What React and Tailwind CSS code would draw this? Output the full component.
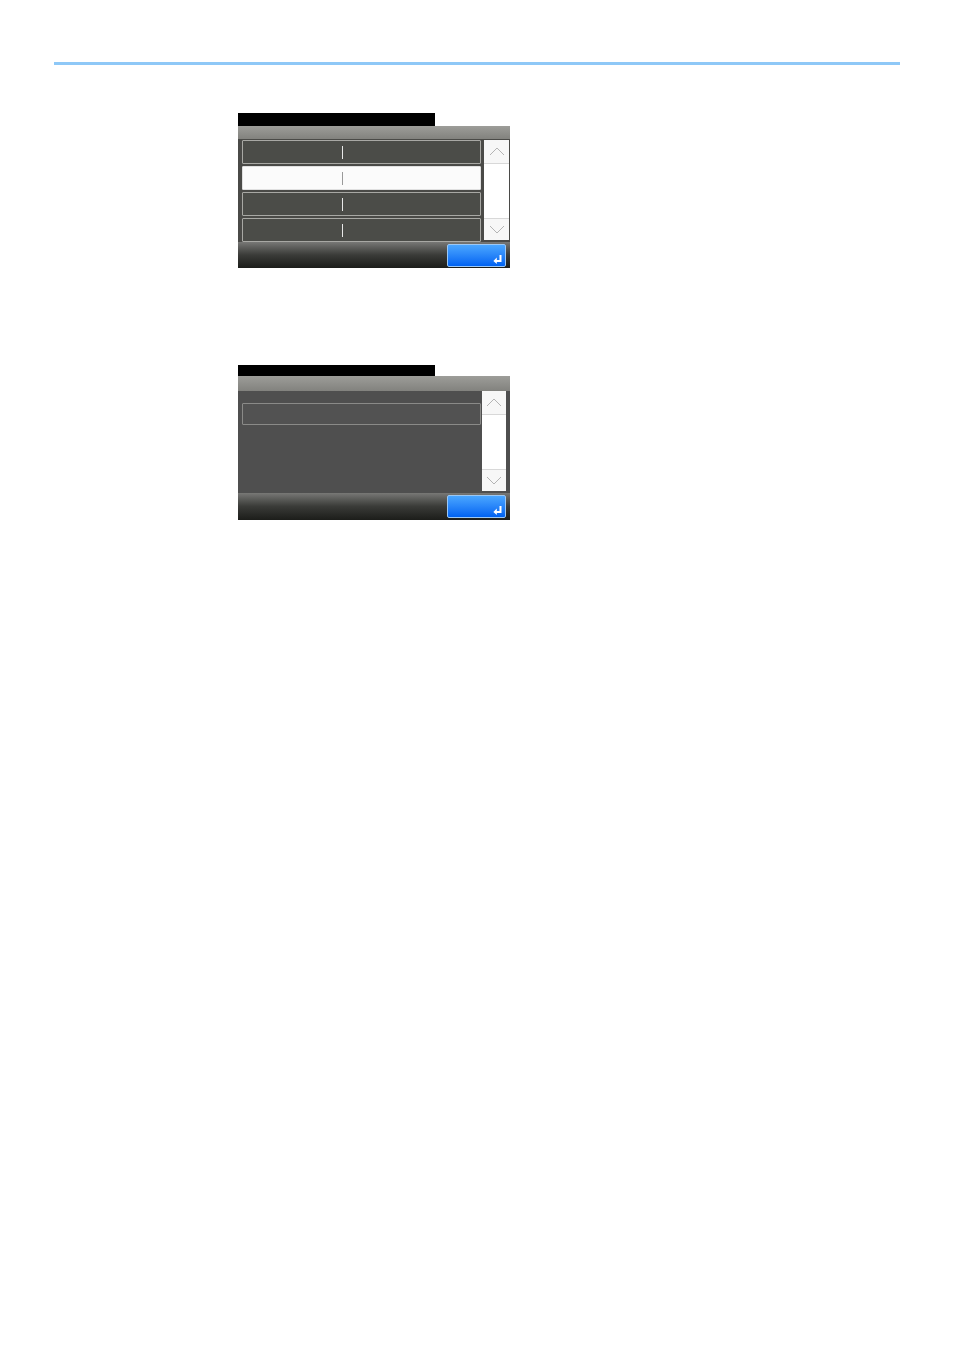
import React from 'react';

const rows = [
  { selected: false },
  { selected: true },
  { selected: false },
  { selected: false },
];

const Chevron = ({ down }) => (
  <svg width="16" height="9" viewBox="0 0 16 9" fill="none">
    <polyline
      points={down ? '1,1 8,8 15,1' : '1,8 8,1 15,8'}
      stroke="#b4b4b4"
      strokeWidth="1"
    />
  </svg>
);

const EnterIcon = () => (
  <svg width="9" height="9" viewBox="0 0 9 9" fill="none">
    <path d="M7.5 0 V6 H3" stroke="white" strokeWidth="2" />
    <path d="M3.8 2.6 L0.4 6 L3.8 9 Z" fill="white" />
  </svg>
);

const ScrollBar = ({ className }) => (
  <div className={`flex flex-col justify-between bg-white ${className}`}>
    <div className="h-[24px] flex items-center justify-center border-b border-[#d8d8d8] bg-[#f7f7f7]">
      <Chevron />
    </div>
    <div className="h-[22px] flex items-center justify-center border-t border-[#d8d8d8] bg-[#f7f7f7]">
      <Chevron down />
    </div>
  </div>
);

const Footer = ({ height }) => (
  <div className={`${height} flex items-center justify-end pr-[4px] bg-gradient-to-b from-[#787876] via-[#3a3b38] to-[#1c1d1a]`}>
    <div className="w-[59px] h-[23px] rounded-[2px] border border-[#9cc8f5] bg-gradient-to-b from-[#4aa6ff] to-[#0062f2] flex items-end justify-end pr-[3px] pb-[2px]">
      <EnterIcon />
    </div>
  </div>
);

const Header = ({ barH, bandH }) => (
  <>
    <div className={`w-[197px] ${barH} bg-black`} />
    <div className={`${bandH} bg-gradient-to-b from-[#9d9d99] to-[#82827e]`} />
  </>
);

const App = () => {
  return (
    <div className="min-h-[1350px] bg-white pt-[62px] pb-8">
      <div className="ml-[54px] w-[846px] h-[3px] bg-[#8ec8f7]" />

      {/* list screen */}
      <div className="ml-[238px] mt-[48px] w-[272px]">
        <Header barH="h-[13px]" bandH="h-[13px]" />
        <div className="h-[103px] bg-[#4a4a47] flex pt-[1px] pl-[4px]">
          <div className="w-[239px] flex flex-col gap-[2px]">
            {rows.map((row, i) => (
              <div
                key={i}
                className={`h-[24px] flex items-center border rounded-[1px] ${
                  row.selected
                    ? 'bg-[#fbfbfb] border-[#e0e0e0]'
                    : 'bg-[#4b4c48] border-[#a8a8a4]'
                }`}
              >
                <div
                  className={`ml-[99px] w-px h-[13px] ${
                    row.selected ? 'bg-[#9a9a9a]' : 'bg-[#e8e8e8]'
                  }`}
                />
              </div>
            ))}
          </div>
          <ScrollBar className="ml-[3px] w-[25px] h-[100px]" />
        </div>
        <Footer height="h-[26px]" />
      </div>

      {/* empty entry screen */}
      <div className="ml-[238px] mt-[97px] w-[272px]">
        <Header barH="h-[11px]" bandH="h-[15px]" />
        <div className="h-[102px] bg-[#4f4f4f] flex pl-[4px]">
          <div className="w-[239px] pt-[12px]">
            <div className="h-[22px] border border-[#8a8a88] rounded-[1px] bg-[#525252]" />
          </div>
          <ScrollBar className="ml-[1px] w-[24px] h-[100px]" />
        </div>
        <Footer height="h-[27px]" />
      </div>
    </div>
  );
};

export default App;
